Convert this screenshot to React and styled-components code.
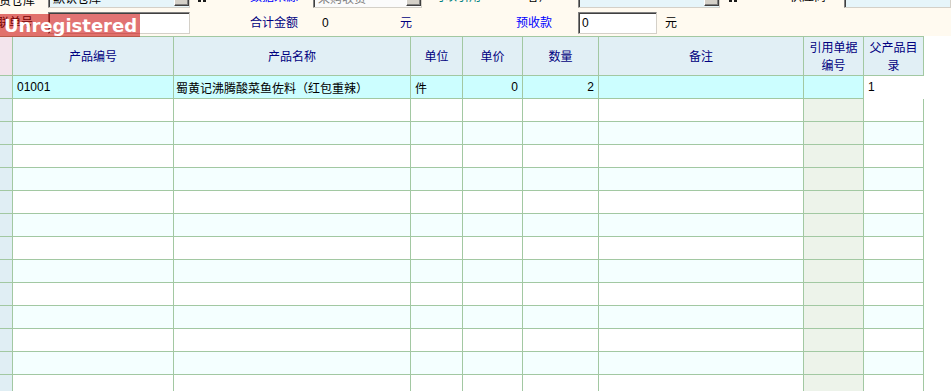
import React from "react";
import styled, { createGlobalStyle } from "styled-components";

const GlobalStyle = createGlobalStyle`
  html, body {
    margin: 0;
    padding: 0;
    background: #ffffff;
    overflow: hidden;
  }
  body {
    font-family: "Liberation Sans", "Noto Sans CJK SC", sans-serif;
    font-size: 12px;
    color: #000000;
  }
`;

const COLS = "13px 161px 237px 52px 60px 76px 205px 60px 60px";
const GRID = "#a2c8a2";

const headers = [
  "",
  "产品编号",
  "产品名称",
  "单位",
  "单价",
  "数量",
  "备注",
  "引用单据编号",
  "父产品目录",
];

const firstRow = ["", "01001", "蜀黄记沸腾酸菜鱼佐料（红包重辣）", "件", "0", "2", "", "", "1"];
const cellAlign = ["left", "left", "left", "left", "right", "right", "left", "left", "left"];

const App = () => {
  const rows = Array.from({ length: 14 }, (_, i) => i);

  return (
    <Page>
      <GlobalStyle />
      <TopPanel>
        <FormRow $top={-14}>
          <Label $w={48} $end $pr={13} $low>
            收货仓库
          </Label>
          <Select $w={142} $bg="#e6f5fa">
            <SelectText>默认仓库</SelectText>
            <DropButton />
          </Select>
          <Spacer $w={7} />
          <FinderIcon />
          <Spacer $w={43} />
          <Label $w={63} $color="#0000ff">
            数据来源
          </Label>
          <Select $w={109} $bg="#fbfbfb">
            <SelectText $muted>采购收货</SelectText>
            <DropButton />
          </Select>
          <Label $w={105} $color="#008080" $pl={11}>
            可以引用
          </Label>
          <Label $w={51} $pl={0}>
            客户
          </Label>
          <Select $w={142} $bg="#e6f5fa">
            <SelectText />
            <DropButton />
          </Select>
          <Spacer $w={8} />
          <FinderIcon />
          <Spacer $w={52} />
          <Label $w={54}>供应商</Label>
          <Select $w={107} $bg="#e6f5fa">
            <SelectText />
          </Select>
        </FormRow>

        <FormRow $top={4}>
          <Label $w={48} $end $pr={15}>
            关联单号
          </Label>
          <Input $w={142} />
          <Spacer $w={60} />
          <Label $w={72} $color="#000080">
            合计金额
          </Label>
          <Label $w={78}>0</Label>
          <Label $w={116} $color="#000080">
            元
          </Label>
          <Label $w={62} $color="#0000ff">
            预收款
          </Label>
          <Input $w={79}>0</Input>
          <Label $w={40} $pl={8}>
            元
          </Label>
        </FormRow>
      </TopPanel>

      <Grid>
        <HeaderRow>
          {headers.map((h, c) => (
            <HeadCell key={c} $bg={c === 0 ? "#f3e4ec" : "#e1eff5"}>
              {h}
            </HeadCell>
          ))}
        </HeaderRow>

        {rows.map((r) => (
          <DataRow key={r}>
            {headers.map((_, c) => {
              let bg = r % 2 === 1 ? "#ffffff" : "#f4ffff";
              if (r === 0) bg = "#ccfeff";
              else if (c === 7) bg = "#edf3ea";
              if (c === 0) bg = "#e0eef4";
              const editing = r === 0 && c === 8;
              if (editing) bg = "#ffffff";
              return (
                <Cell
                  key={c}
                  $bg={bg}
                  $align={cellAlign[c]}
                  $pad={c === 2 ? 2 : 4}
                  $editing={editing}
                >
                  {r === 0 ? firstRow[c] : ""}
                </Cell>
              );
            })}
          </DataRow>
        ))}
      </Grid>

      <Badge>Unregistered</Badge>
    </Page>
  );
};

export default App;

const FinderIcon = () => (
  <IconSvg viewBox="0 0 10 12">
    <path d="M1 3h3v2h2V3h3v8H6V7H4v4H1z" fill="#1a1a1a" />
    <rect x="2" y="1" width="2" height="2" fill="#1a1a1a" />
    <rect x="6" y="1" width="2" height="2" fill="#1a1a1a" />
  </IconSvg>
);

const Page = styled.div`
  position: relative;
  width: 951px;
  height: 391px;
  overflow: hidden;
  background: #ffffff;
`;

const TopPanel = styled.div`
  height: 36px;
  background: #fffaf0;
  overflow: hidden;
  display: flex;
  flex-direction: column;
`;

const FormRow = styled.div`
  display: flex;
  align-items: center;
  height: 22px;
  flex: none;
  margin-top: ${(p) => p.$top}px;
`;

const Label = styled.div`
  flex: none;
  width: ${(p) => p.$w}px;
  box-sizing: border-box;
  display: flex;
  justify-content: ${(p) => (p.$end ? "flex-end" : "flex-start")};
  align-self: ${(p) => (p.$low ? "flex-end" : "center")};
  line-height: 14px;
  padding-right: ${(p) => p.$pr || 0}px;
  padding-left: ${(p) => p.$pl || 0}px;
  color: ${(p) => p.$color || "#000000"};
  white-space: nowrap;
  overflow: hidden;
`;

const Spacer = styled.div`
  flex: none;
  width: ${(p) => p.$w}px;
`;

const sunken = `
  box-sizing: border-box;
  height: 22px;
  border: 1px solid;
  border-color: #808080 #d4d0c8 #d4d0c8 #808080;
  box-shadow: inset 1px 1px 0 #404040;
`;

const Select = styled.div`
  ${sunken}
  flex: none;
  width: ${(p) => p.$w}px;
  background: ${(p) => p.$bg};
  display: flex;
  align-items: stretch;
  padding: 2px 0 1px 2px;
`;

const SelectText = styled.div`
  flex: 1;
  display: flex;
  align-items: center;
  padding-left: 2px;
  color: ${(p) => (p.$muted ? "#808080" : "#000000")};
  white-space: nowrap;
  overflow: hidden;
`;

const DropButton = styled.div`
  flex: none;
  width: 15px;
  box-sizing: border-box;
  background: #d4d0c8;
  border: 1px solid;
  border-color: #ffffff #404040 #404040 #ffffff;
  box-shadow: inset -1px -1px 0 #808080;
`;

const Input = styled.div`
  ${sunken}
  flex: none;
  width: ${(p) => p.$w}px;
  background: #ffffff;
  display: flex;
  align-items: center;
  padding-left: 3px;
`;

const IconSvg = styled.svg`
  flex: none;
  width: 10px;
  height: 12px;
`;

const Grid = styled.div`
  display: flex;
  flex-direction: column;
`;

const HeaderRow = styled.div`
  display: grid;
  grid-template-columns: ${COLS};
  width: 924px;
  border-top: 1px solid ${GRID};
`;

const DataRow = styled.div`
  display: grid;
  grid-template-columns: ${COLS};
  width: 924px;
`;

const HeadCell = styled.div`
  box-sizing: border-box;
  height: 39px;
  background: ${(p) => p.$bg};
  border-right: 1px solid ${GRID};
  border-bottom: 1px solid ${GRID};
  display: flex;
  align-items: center;
  justify-content: center;
  text-align: center;
  color: #000080;
  line-height: 18px;
  font-family: "Noto Sans CJK SC", sans-serif;
  padding: 0 2px;
`;

const Cell = styled.div`
  box-sizing: border-box;
  height: 23px;
  background: ${(p) => p.$bg};
  border-right: 1px solid ${(p) => (p.$editing ? "#ffffff" : GRID)};
  border-bottom: 1px solid ${(p) => (p.$editing ? "#ffffff" : GRID)};
  display: flex;
  align-items: center;
  justify-content: ${(p) => (p.$align === "right" ? "flex-end" : "flex-start")};
  padding: 0 ${(p) => p.$pad}px;
  white-space: nowrap;
  overflow: hidden;
`;

const Badge = styled.div`
  position: absolute;
  left: 0;
  top: 14px;
  width: 140px;
  height: 23px;
  box-sizing: border-box;
  padding-left: 4px;
  background: rgba(200, 0, 0, 0.55);
  color: #ffffff;
  font-family: "DejaVu Sans", sans-serif;
  font-weight: bold;
  font-size: 18px;
  line-height: 23px;
  white-space: nowrap;
`;
